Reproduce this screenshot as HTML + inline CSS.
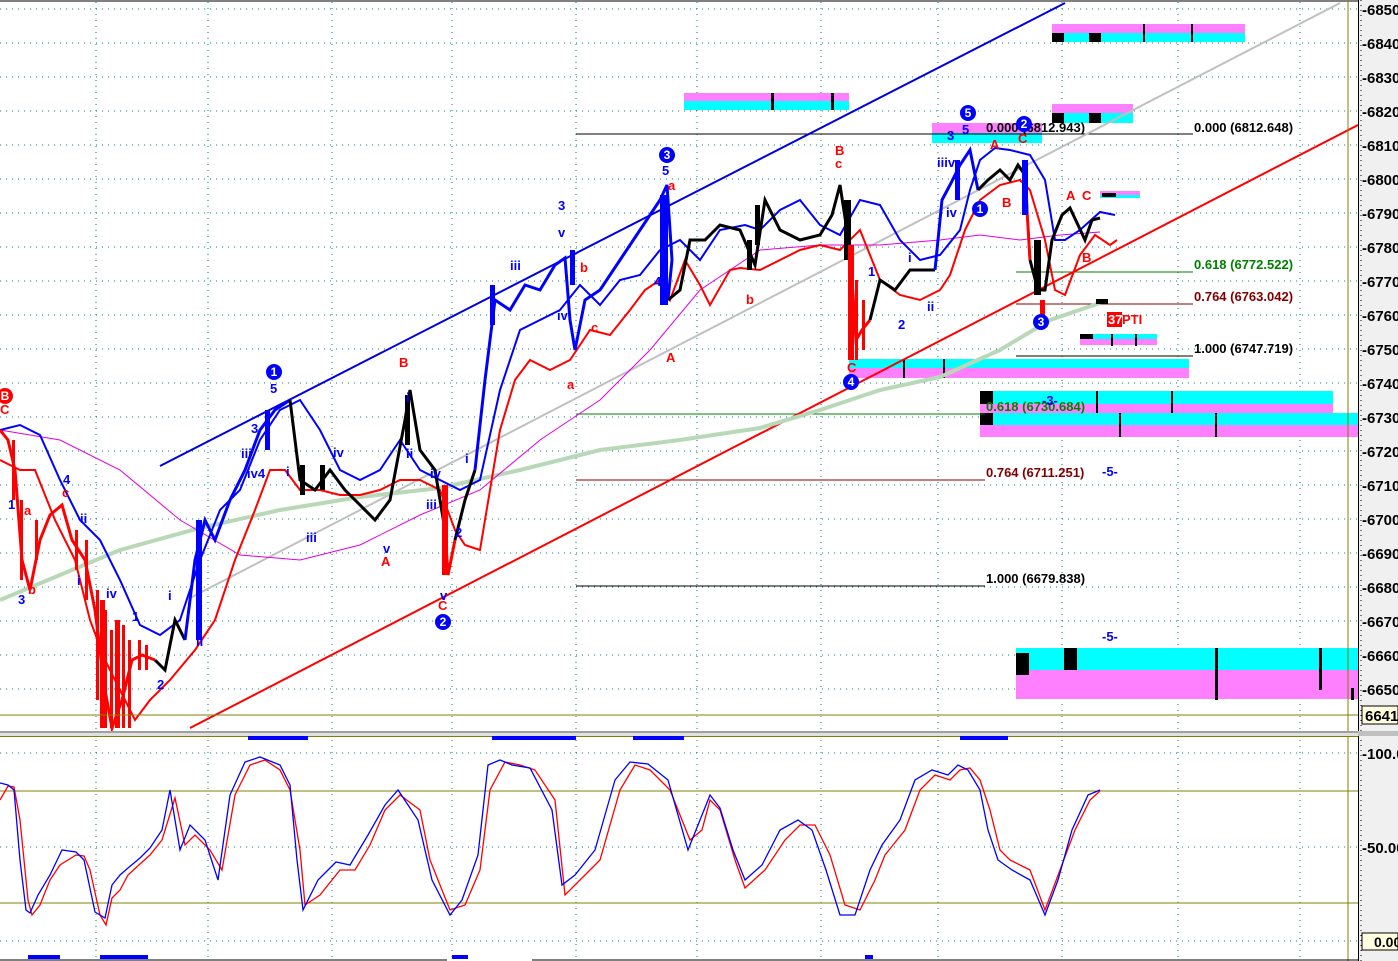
<!DOCTYPE html>
<html><head><meta charset="utf-8"><style>
html,body{margin:0;padding:0;background:#fff;width:1398px;height:961px;overflow:hidden}
svg{display:block;font-family:"Liberation Sans",Arial,sans-serif}
</style></head><body>
<svg width="1398" height="961" viewBox="0 0 1398 961" xmlns="http://www.w3.org/2000/svg">
<rect width="1398" height="961" fill="#fff"/>
<rect x="0" y="0" width="1358" height="2" fill="#808080"/>
<g stroke="#008080" stroke-width="1" stroke-dasharray="1,5">
<line x1="0" y1="9" x2="1358" y2="9"/><line x1="0" y1="43" x2="1358" y2="43"/><line x1="0" y1="77" x2="1358" y2="77"/><line x1="0" y1="111" x2="1358" y2="111"/><line x1="0" y1="145" x2="1358" y2="145"/><line x1="0" y1="179" x2="1358" y2="179"/><line x1="0" y1="213" x2="1358" y2="213"/><line x1="0" y1="247" x2="1358" y2="247"/><line x1="0" y1="281" x2="1358" y2="281"/><line x1="0" y1="315" x2="1358" y2="315"/><line x1="0" y1="349" x2="1358" y2="349"/><line x1="0" y1="383" x2="1358" y2="383"/><line x1="0" y1="417" x2="1358" y2="417"/><line x1="0" y1="451" x2="1358" y2="451"/><line x1="0" y1="485" x2="1358" y2="485"/><line x1="0" y1="519" x2="1358" y2="519"/><line x1="0" y1="553" x2="1358" y2="553"/><line x1="0" y1="587" x2="1358" y2="587"/><line x1="0" y1="621" x2="1358" y2="621"/><line x1="0" y1="655" x2="1358" y2="655"/><line x1="0" y1="689" x2="1358" y2="689"/>
<line x1="0" y1="753" x2="1358" y2="753"/><line x1="0" y1="847" x2="1358" y2="847"/><line x1="0" y1="941" x2="1358" y2="941"/>
</g>
<g stroke="#008080" stroke-width="1" stroke-dasharray="1,5">
<line x1="96" y1="2" x2="96" y2="730"/><line x1="208" y1="2" x2="208" y2="730"/><line x1="332" y1="2" x2="332" y2="730"/><line x1="452" y1="2" x2="452" y2="730"/><line x1="576" y1="2" x2="576" y2="730"/><line x1="697" y1="2" x2="697" y2="730"/><line x1="821" y1="2" x2="821" y2="730"/><line x1="938" y1="2" x2="938" y2="730"/><line x1="1062" y1="2" x2="1062" y2="730"/><line x1="1178" y1="2" x2="1178" y2="730"/><line x1="1300" y1="2" x2="1300" y2="730"/>
<line x1="96" y1="740" x2="96" y2="961"/><line x1="208" y1="740" x2="208" y2="961"/><line x1="332" y1="740" x2="332" y2="961"/><line x1="452" y1="740" x2="452" y2="961"/><line x1="576" y1="740" x2="576" y2="961"/><line x1="697" y1="740" x2="697" y2="961"/><line x1="821" y1="740" x2="821" y2="961"/><line x1="938" y1="740" x2="938" y2="961"/><line x1="1062" y1="740" x2="1062" y2="961"/><line x1="1178" y1="740" x2="1178" y2="961"/><line x1="1300" y1="740" x2="1300" y2="961"/>
</g>
<g>
<rect x="684" y="93" width="165" height="8" fill="#ff80ff"/><rect x="684" y="101" width="165" height="9" fill="#00ffff"/>
<rect x="771" y="93" width="3" height="17" fill="#000"/><rect x="831" y="93" width="3" height="17" fill="#000"/>
<rect x="1052" y="24" width="193" height="9" fill="#ff80ff"/><rect x="1052" y="33" width="193" height="9" fill="#00ffff"/>
<rect x="1052" y="33" width="12" height="9" fill="#000"/><rect x="1089" y="33" width="12" height="9" fill="#000"/><rect x="1143" y="24" width="2" height="18" fill="#000"/><rect x="1191" y="24" width="2" height="18" fill="#000"/>
<rect x="1052" y="104" width="81" height="9" fill="#ff80ff"/><rect x="1052" y="113" width="81" height="10" fill="#00ffff"/><rect x="1052" y="113" width="12" height="10" fill="#000"/><rect x="1089" y="113" width="12" height="10" fill="#000"/>
<rect x="932" y="123" width="110" height="10" fill="#ff80ff"/><rect x="932" y="133" width="110" height="10" fill="#00ffff"/>
<rect x="1100" y="191" width="40" height="4" fill="#ff80ff"/><rect x="1100" y="195" width="40" height="3" fill="#00ffff"/>
<rect x="1080" y="334" width="77" height="5" fill="#00ffff"/><rect x="1080" y="339" width="77" height="6" fill="#ff80ff"/><rect x="1080" y="334" width="13" height="5" fill="#000"/><rect x="1111" y="334" width="2" height="12" fill="#000"/><rect x="1135" y="334" width="2" height="12" fill="#000"/>
<rect x="849" y="359" width="340" height="9" fill="#00ffff"/><rect x="849" y="368" width="340" height="10" fill="#ff80ff"/><rect x="903" y="359" width="2" height="19" fill="#000"/><rect x="943" y="359" width="2" height="19" fill="#000"/>
<rect x="980" y="391" width="353" height="13" fill="#00ffff"/><rect x="980" y="404" width="353" height="9" fill="#ff80ff"/><rect x="980" y="391" width="13" height="13" fill="#000"/><rect x="1096" y="391" width="2" height="22" fill="#000"/><rect x="1171" y="391" width="2" height="22" fill="#000"/>
<rect x="980" y="413" width="378" height="12" fill="#00ffff"/><rect x="980" y="425" width="378" height="12" fill="#ff80ff"/><rect x="980" y="413" width="13" height="12" fill="#000"/><rect x="1119" y="413" width="2" height="24" fill="#000"/><rect x="1215" y="413" width="2" height="24" fill="#000"/>
<rect x="1016" y="648" width="342" height="22" fill="#00ffff"/><rect x="1016" y="670" width="342" height="29" fill="#ff80ff"/><rect x="1016" y="653" width="13" height="22" fill="#000"/><rect x="1064" y="648" width="13" height="22" fill="#000"/><rect x="1215" y="648" width="3" height="52" fill="#000"/><rect x="1319" y="648" width="3" height="42" fill="#000"/><rect x="1351" y="688" width="3" height="12" fill="#000"/>
</g>
<g stroke-width="1">
<line x1="576" y1="134" x2="1193" y2="134" stroke="#000"/>
<line x1="1016" y1="272" x2="1193" y2="272" stroke="#008000"/>
<line x1="1016" y1="304" x2="1193" y2="304" stroke="#800000"/>
<line x1="1016" y1="356" x2="1193" y2="356" stroke="#000"/>
<line x1="576" y1="414" x2="985" y2="414" stroke="#008000"/>
<line x1="576" y1="480" x2="985" y2="480" stroke="#800000"/>
<line x1="576" y1="586" x2="985" y2="586" stroke="#000"/>
</g>
<g font-size="13" font-weight="bold">
<text x="1194" y="132" fill="#000">0.000 (6812.648)</text>
<text x="1194" y="269" fill="#008000">0.618 (6772.522)</text>
<text x="1194" y="301" fill="#800000">0.764 (6763.042)</text>
<text x="1194" y="353" fill="#000">1.000 (6747.719)</text>
<text x="986" y="132" fill="#000">0.000 (6812.943)</text>
<text x="986" y="411" fill="#008000">0.618 (6730.684)</text>
<text x="986" y="477" fill="#800000">0.764 (6711.251)</text>
<text x="986" y="583" fill="#000">1.000 (6679.838)</text>
</g>
<line x1="160" y1="466" x2="1065" y2="3" stroke="#0000e0" stroke-width="2"/>
<line x1="190" y1="728" x2="1358" y2="125" stroke="#ff0000" stroke-width="2"/>
<line x1="190" y1="598" x2="1340" y2="3" stroke="#c0c0c0" stroke-width="2"/>
<polyline fill="none" stroke="#b8d8b8" stroke-width="4" points="0,600 60,575 120,550 200,528 280,510 360,497 440,488 520,470 600,450 680,440 760,428 820,410 880,390 940,377 1000,350 1050,320 1100,303"/>
<polyline fill="none" stroke="#e000e0" stroke-width="1" points="0,430 60,440 120,470 180,520 240,555 300,560 360,545 420,515 480,490 540,440 600,400 650,350 700,290 760,250 820,245 880,245 940,240 980,235 1020,240 1060,235 1100,232"/>
<polyline fill="none" stroke="#0000ff" stroke-width="2" points="0,430 20,425 40,435 60,480 80,520 100,540 120,580 140,625 160,635 180,620 200,560 220,510 240,490 260,440 280,410 300,400 320,430 340,470 360,480 380,470 400,440 420,470 440,480 460,490 480,480 500,390 520,330 540,320 560,310 580,285 600,305 620,280 640,275 660,250 680,240 700,260 720,230 745,225 760,230 780,210 800,200 820,225 840,235 860,200 880,205 900,240 920,260 940,255 960,230 970,190 980,160 995,148 1010,150 1030,155 1045,180 1055,240 1065,240 1080,230 1100,212 1115,215"/>
<polyline fill="none" stroke="#ff0000" stroke-width="2" points="0,460 20,470 35,470 55,520 75,560 90,620 105,660 120,690 135,720 150,700 170,680 195,650 215,620 235,560 255,510 270,470 285,470 300,490 320,490 340,495 360,495 380,490 400,480 420,480 440,490 455,530 465,545 480,550 500,430 515,380 530,360 550,370 570,360 590,330 610,335 630,310 645,290 660,280 670,300 685,260 700,285 710,305 730,270 740,268 760,270 780,260 800,250 820,245 840,250 860,230 880,280 900,295 920,300 940,290 950,275 965,230 980,200 1000,185 1020,180 1030,190 1045,240 1055,290 1065,295 1080,255 1095,235 1110,245 1117,240"/>
<g stroke-width="3" fill="none">
<polyline stroke="#ff0000" points="0,430 8,440 15,470 22,560 30,590 40,540 50,515 62,505 72,540 85,560 95,610 105,690 112,728 122,700 132,660 142,655 155,660"/>
<polyline stroke="#000" points="155,660 165,670 175,620 185,640"/>
<polyline stroke="#0000ff" points="185,640 195,560 205,520 215,540 230,500 245,470 260,430 275,410 290,400"/>
<polyline stroke="#000" points="290,400 300,480 315,490 330,470 345,490 360,505 375,520 390,500 405,420 410,390 420,450 435,470 445,530"/>
<polyline stroke="#ff0000" points="445,530 448,575 455,540"/>
<polyline stroke="#000" points="455,540 465,500 475,470"/>
<polyline stroke="#0000ff" points="475,470 485,380 495,300 510,310 525,285 540,290 555,265 565,258 570,320 575,350 585,300 600,290 620,260 640,230 660,200 667,185 672,260 668,300"/>
<polyline stroke="#000" points="668,300 680,290 690,240 705,240 720,225 740,230 755,265 765,200 780,230 800,240 820,235 832,215 840,185 850,250"/>
<polyline stroke="#ff0000" points="850,250 856,340 862,330 870,320"/>
<polyline stroke="#000" points="870,320 880,280 895,290 910,270 925,270 935,270"/>
<polyline stroke="#0000ff" points="935,270 942,200 950,185 960,165 970,150 978,190"/>
<polyline stroke="#000" points="978,190 988,180 1000,170 1010,180 1018,165 1025,175"/>
<polyline stroke="#0000ff" points="1025,160 1027,210"/>
<polyline stroke="#ff0000" points="1027,210 1030,260"/>
<polyline stroke="#000" points="1030,260 1038,290 1045,290 1052,240 1062,215 1070,208 1078,225 1085,240 1092,220 1100,218"/>
</g>
<g fill="#ff0000">
<rect x="96" y="590" width="3" height="110"/><rect x="104" y="610" width="3" height="118"/><rect x="110" y="630" width="3" height="98"/><rect x="122" y="625" width="3" height="103"/><rect x="128" y="640" width="3" height="88"/><rect x="138" y="640" width="3" height="30"/><rect x="145" y="645" width="3" height="25"/>
<rect x="12" y="440" width="3" height="60"/><rect x="20" y="500" width="3" height="80"/><rect x="35" y="520" width="3" height="40"/><rect x="75" y="530" width="3" height="40"/><rect x="85" y="540" width="3" height="60"/>
<rect x="855" y="280" width="3" height="80"/><rect x="862" y="300" width="3" height="50"/>
</g>
<g fill="#000"><rect x="1034" y="240" width="7" height="55"/><rect x="747" y="240" width="5" height="30"/><rect x="844" y="200" width="7" height="60"/><rect x="660" y="195" width="8" height="110" fill="#0000ff"/><rect x="1022" y="160" width="6" height="55" fill="#0000ff"/><rect x="848" y="245" width="6" height="115" fill="#ff0000"/><rect x="442" y="485" width="6" height="90" fill="#ff0000"/><rect x="196" y="520" width="6" height="120" fill="#0000ff"/><rect x="100" y="600" width="5" height="128" fill="#ff0000"/><rect x="115" y="620" width="5" height="108" fill="#ff0000"/><rect x="1040" y="300" width="5" height="25" fill="#ff0000"/><rect x="1096" y="299" width="12" height="5"/><rect x="1102" y="193" width="14" height="4"/>
<rect x="405" y="395" width="5" height="50"/><rect x="300" y="465" width="5" height="30"/><rect x="320" y="465" width="5" height="25"/><rect x="755" y="205" width="5" height="40"/><rect x="570" y="250" width="5" height="35" fill="#0000ff"/><rect x="490" y="285" width="5" height="40" fill="#0000ff"/><rect x="265" y="410" width="5" height="40" fill="#0000ff"/><rect x="955" y="160" width="5" height="40" fill="#0000ff"/></g>
<g font-size="13" font-weight="bold">
<g fill="#ff0000">
<text x="0" y="414">C</text><text x="24" y="515">a</text><text x="28" y="594">b</text><text x="62" y="497">c</text><text x="580" y="272">b</text><text x="567" y="389">a</text><text x="591" y="332">c</text><text x="666" y="362">A</text><text x="668" y="190">a</text><text x="746" y="304">b</text><text x="835" y="155">B</text><text x="835" y="168">c</text><text x="847" y="372">C</text><text x="399" y="367">B</text><text x="381" y="566">A</text><text x="438" y="610">C</text><text x="990" y="149">A</text><text x="1002" y="207">B</text><text x="1018" y="143">C</text><text x="1066" y="200">A</text><text x="1082" y="200">C</text><text x="1082" y="262">B</text><text x="1122" y="324">PTI</text>
</g>
<rect x="1107" y="312" width="15" height="15" fill="#ff0000"/><text x="1108" y="324" fill="#fff">37</text>
<g fill="#0000ff">
<text x="8" y="509">1</text><text x="18" y="604">3</text><text x="63" y="484">4</text><text x="77" y="585">i</text><text x="80" y="523">ii</text><text x="106" y="598">iv</text><text x="132" y="621">1</text><text x="157" y="689">2</text><text x="168" y="600">i</text><text x="196" y="646">ii</text><text x="270" y="393">5</text><text x="251" y="433">3</text><text x="241" y="458">iii</text><text x="247" y="478">iv4</text><text x="286" y="476">i</text><text x="306" y="542">iii</text><text x="333" y="457">iv</text><text x="383" y="553">v</text><text x="406" y="402">i</text><text x="406" y="458">ii</text><text x="430" y="478">iv</text><text x="426" y="509">iii</text><text x="440" y="600">v</text><text x="455" y="537">2</text><text x="465" y="463">i</text><text x="510" y="270">iii</text><text x="558" y="210">3</text><text x="558" y="237">v</text><text x="557" y="320">iv</text><text x="662" y="175">5</text><text x="654" y="286">4</text><text x="868" y="276">1</text><text x="898" y="329">2</text><text x="908" y="262">i</text><text x="927" y="311">ii</text><text x="937" y="167">iiiv</text><text x="946" y="217">iv</text><text x="947" y="140">3</text><text x="962" y="134">5</text><text x="1102" y="476">-5-</text><text x="1102" y="641">-5-</text><text x="1042" y="405">-3-</text>
</g>
</g>
<g font-size="12" font-weight="bold" text-anchor="middle" fill="#fff">
<circle cx="5" cy="396" r="8" fill="#ff0000"/><text x="5" y="400">B</text>
<circle cx="274" cy="372" r="8" fill="#0000ff"/><text x="274" y="376">1</text>
<circle cx="443" cy="622" r="8" fill="#0000ff"/><text x="443" y="626">2</text>
<circle cx="667" cy="155" r="8" fill="#0000ff"/><text x="667" y="159">3</text>
<circle cx="851" cy="382" r="8" fill="#0000ff"/><text x="851" y="386">4</text>
<circle cx="968" cy="113" r="8" fill="#0000ff"/><text x="968" y="117">5</text>
<circle cx="1024" cy="124" r="8" fill="#0000ff"/><text x="1024" y="128">2</text>
<circle cx="980" cy="209" r="8" fill="#0000ff"/><text x="980" y="213">1</text>
<circle cx="1041" cy="322" r="8" fill="#0000ff"/><text x="1041" y="326">3</text>
</g>
<line x1="0" y1="715" x2="1358" y2="715" stroke="#808000"/>
<line x1="1348" y1="0" x2="1348" y2="961" stroke="#808000"/>
<rect x="0" y="731" width="1398" height="2" fill="#a0a0a0"/><rect x="0" y="733" width="1398" height="3" fill="#e0e0e0"/><rect x="0" y="736" width="1358" height="1" fill="#808000"/>
<line x1="0" y1="791" x2="1358" y2="791" stroke="#808000"/>
<line x1="0" y1="903" x2="1358" y2="903" stroke="#808000"/>
<g fill="#0000ff">
<rect x="248" y="736" width="60" height="4"/><rect x="492" y="736" width="84" height="4"/><rect x="633" y="736" width="51" height="4"/><rect x="960" y="736" width="48" height="4"/>
<rect x="28" y="955" width="32" height="4"/><rect x="100" y="955" width="48" height="4"/><rect x="452" y="955" width="16" height="4"/><rect x="865" y="955" width="8" height="4"/>
</g>
<line x1="0" y1="960" x2="447" y2="960" stroke="#000"/><line x1="532" y1="960" x2="1358" y2="960" stroke="#000"/>
<polyline fill="none" stroke="#ff0000" stroke-width="1.3" points="0,800 8,786 14,787 20,820 28,900 32,915 40,905 50,880 60,865 76,855 84,856 90,870 100,915 106,925 112,898 120,890 128,875 140,864 150,855 162,840 175,798 185,845 195,835 210,850 222,870 235,795 250,765 265,760 280,770 290,790 300,850 305,905 320,895 340,870 355,870 370,845 385,810 400,795 420,810 430,860 450,910 465,905 480,870 490,790 505,762 520,765 535,770 555,800 565,895 580,880 600,860 620,790 635,765 650,770 670,790 690,840 702,830 710,800 720,810 735,860 745,888 765,870 785,840 800,825 815,825 830,855 845,905 860,910 875,880 885,855 905,830 920,790 935,775 950,780 960,770 970,768 980,780 990,810 1000,850 1010,860 1030,870 1045,910 1060,870 1075,830 1090,800 1100,791"/>
<polyline fill="none" stroke="#0000ff" stroke-width="1.3" points="0,783 8,785 14,790 20,860 26,910 30,913 38,895 50,875 62,850 76,852 84,860 95,912 105,918 112,885 120,875 128,868 140,858 150,848 162,830 170,790 180,850 190,825 205,840 218,880 230,795 245,762 260,757 280,765 290,785 297,860 303,910 318,880 336,862 350,865 368,835 385,805 398,790 418,820 432,880 450,915 462,900 478,855 488,765 500,760 512,765 530,768 552,810 562,885 575,875 595,850 615,780 630,762 648,764 668,780 688,850 700,820 710,795 720,808 733,850 745,880 762,865 780,830 798,820 812,830 826,870 840,915 855,915 870,870 882,845 900,820 915,780 932,770 948,775 958,765 968,770 980,790 988,830 998,860 1012,870 1030,880 1045,915 1058,880 1072,830 1088,795 1100,790"/>
<rect x="1358" y="0" width="40" height="961" fill="#f0f0f0"/>
<line x1="1358.5" y1="0" x2="1358.5" y2="961" stroke="#000"/>
<line x1="1361" y1="0" x2="1361" y2="961" stroke="#000" stroke-dasharray="1,4"/>
<rect x="1358" y="731" width="40" height="5" fill="#c0c0c0"/>
<g font-size="15" font-weight="bold" fill="#000" font-family="'Liberation Sans Narrow','Liberation Sans',sans-serif">
<text x="1362" y="15">-6850.</text><text x="1362" y="49">-6840.</text><text x="1362" y="83">-6830.</text><text x="1362" y="117">-6820.</text><text x="1362" y="151">-6810.</text><text x="1362" y="185">-6800.</text><text x="1362" y="219">-6790.</text><text x="1362" y="253">-6780.</text><text x="1362" y="287">-6770.</text><text x="1362" y="321">-6760.</text><text x="1362" y="355">-6750.</text><text x="1362" y="389">-6740.</text><text x="1362" y="423">-6730.</text><text x="1362" y="457">-6720.</text><text x="1362" y="491">-6710.</text><text x="1362" y="525">-6700.</text><text x="1362" y="559">-6690.</text><text x="1362" y="593">-6680.</text><text x="1362" y="627">-6670.</text><text x="1362" y="661">-6660.</text><text x="1362" y="695">-6650.</text>
<text x="1362" y="759">-100.0</text><text x="1362" y="853">-50.00</text>
</g>
<rect x="1362" y="706" width="36" height="18" fill="#ffffe0" stroke="#000"/>
<text x="1365" y="721" font-size="15" font-weight="bold" font-family="'Liberation Sans Narrow','Liberation Sans',sans-serif">6641.5</text>
<rect x="1362" y="933" width="36" height="17" fill="#ffffe0" stroke="#000"/>
<text x="1374" y="947" font-size="14" font-weight="bold">0.00</text>
</svg>
</body></html>
